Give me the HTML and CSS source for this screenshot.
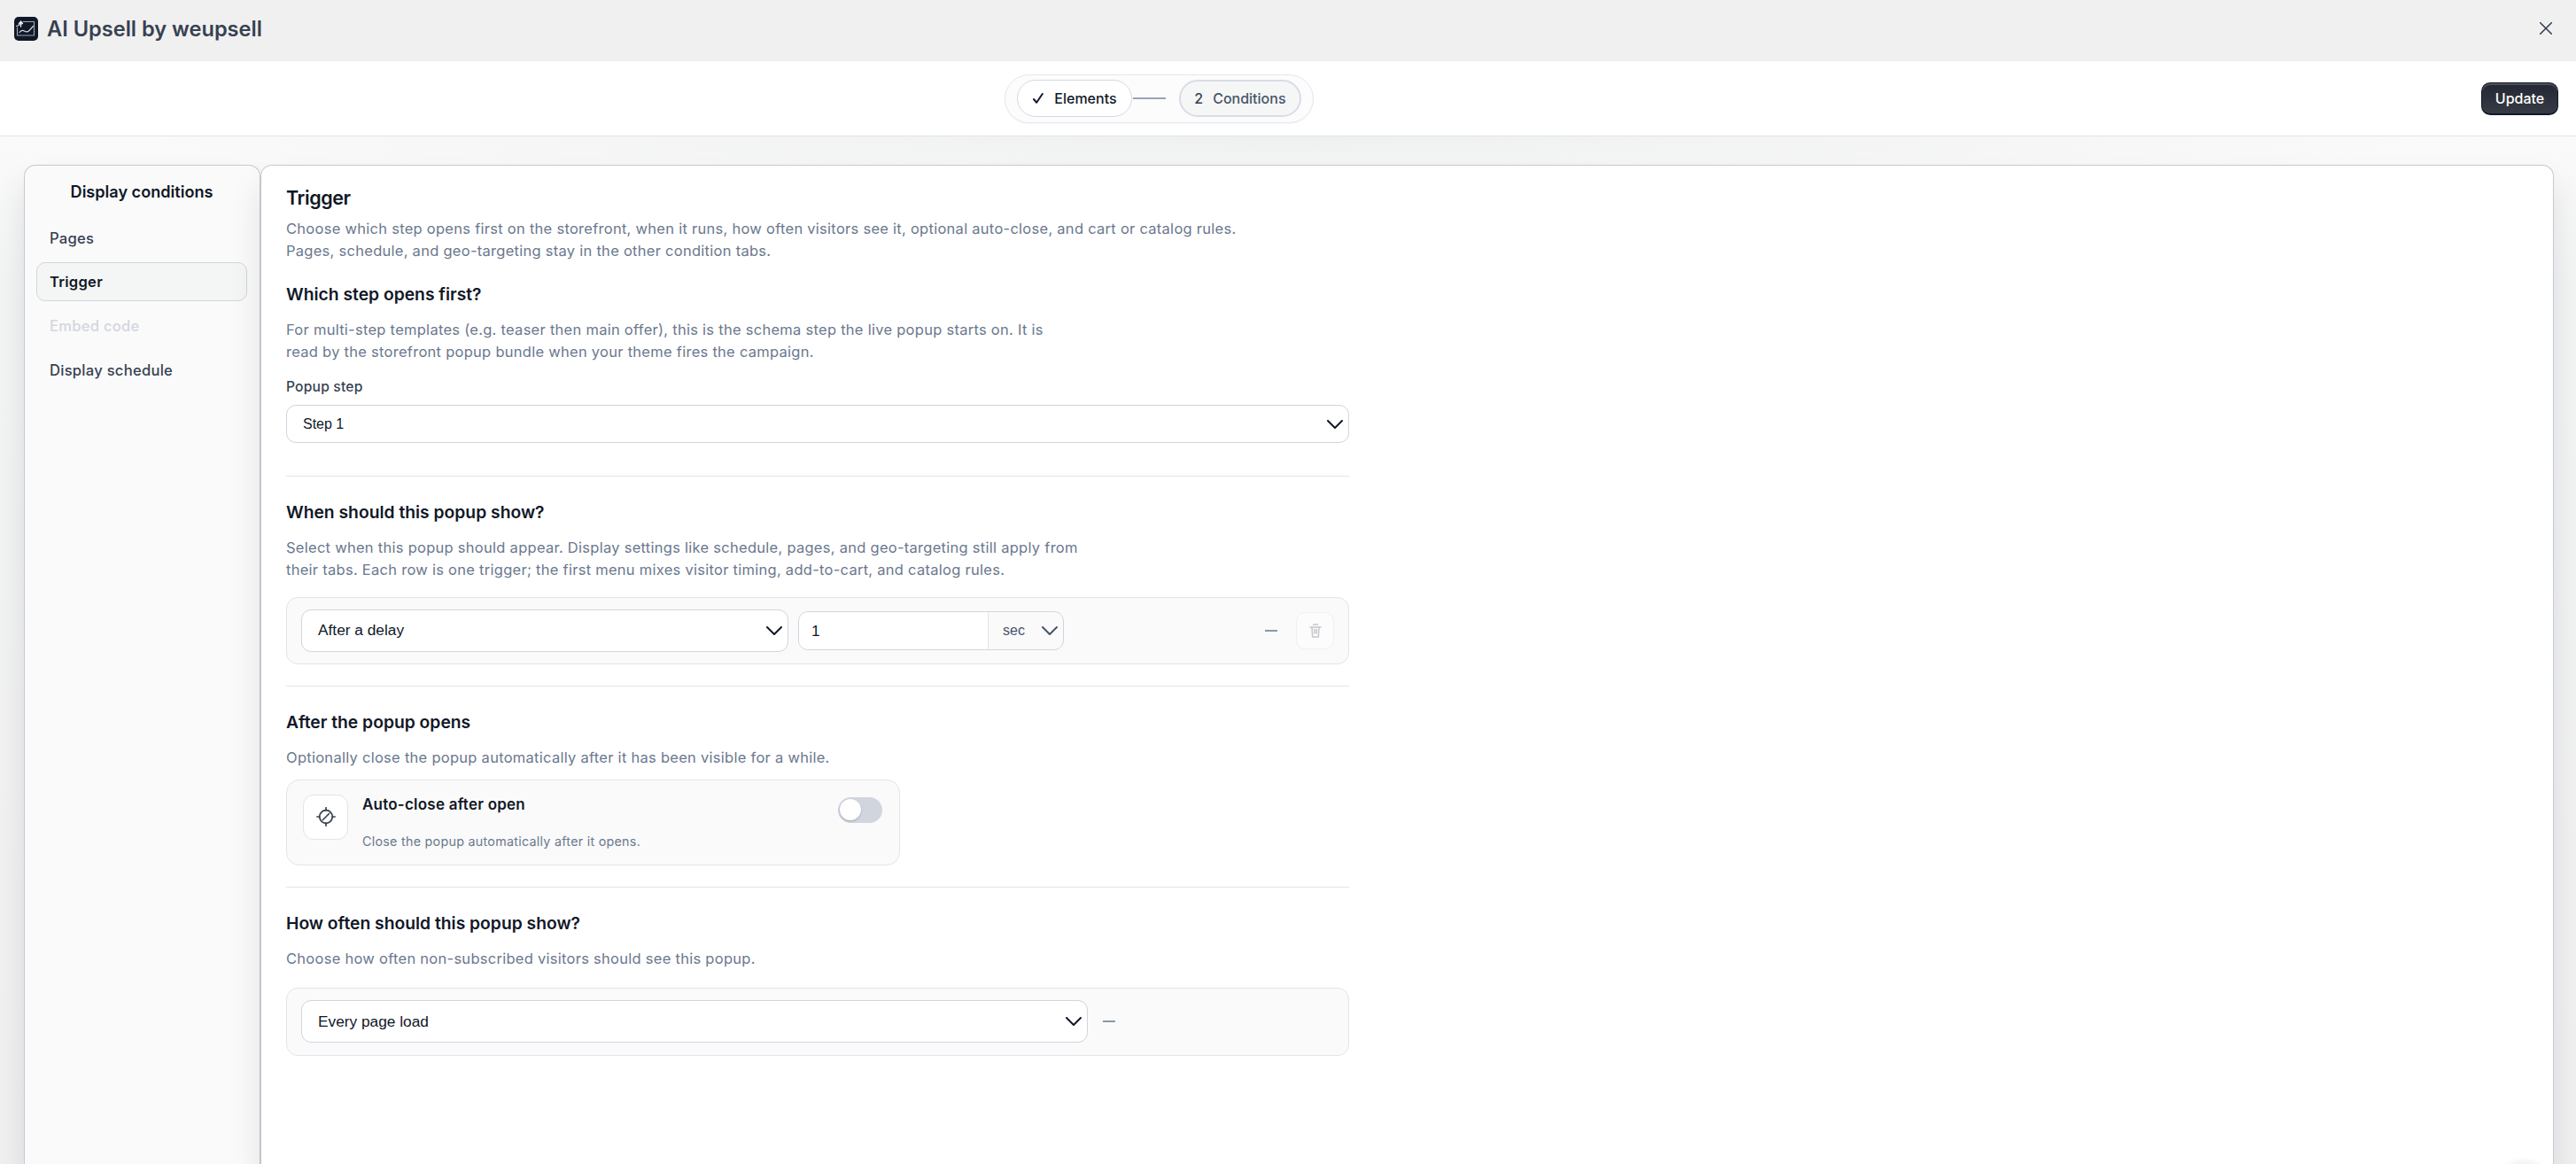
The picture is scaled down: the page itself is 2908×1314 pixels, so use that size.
FILE: index.html
```html
<!DOCTYPE html>
<html lang="en">
<head>
    <meta charset="UTF-8">
    <meta name="viewport" content="width=device-width, initial-scale=1.0">
    <title>AI Upsell by weupsell</title>
    <link rel="stylesheet" href="styles.css">
</head>
<body>
    <header class="titlebar">
        <svg class="logo" viewBox="0 0 27 27">
            <rect width="27" height="27" rx="5" fill="#111827"/>
            <path d="M10 5.500h12.500v15.500h-19v-9" fill="none" stroke="#9aa3b2" stroke-width="1.200"/>
            <path d="M6 17.500c2-2.500 4-2.500 5.500-1.500s4 1 5.500-.5 3-3.500 4.500-5" fill="none" stroke="#d1d5db" stroke-width="1.200"/>
            <path d="M2.500 10.500l3-1v-1.500h3" fill="none" stroke="#d1d5db" stroke-width="1.200"/>
            <path d="M7.500 5v6M5.500 7.500l2-2 2 2" fill="none" stroke="#fff" stroke-width="1.300"/>
        </svg>
        <span class="app-name">AI Upsell by weupsell</span>
        <svg class="close" viewBox="0 0 14 14"><path d="M.7.7l12.600 12.600M13.300.7L.7 13.300"/></svg>
    </header>

    <div class="toolbar">
        <div class="steps">
            <div class="step done">
                <svg class="check" viewBox="0 0 12 12"><path d="M1 7l3.200 3.800L10.800 1"/></svg>
                <span>Elements</span>
            </div>
            <div class="step-line"></div>
            <div class="step current"><span class="num">2</span><span>Conditions</span></div>
        </div>
        <button class="update">Update</button>
    </div>

    <main class="workspace">
        <aside class="sidebar">
            <h3>Display conditions</h3>
            <nav>
                <a>Pages</a>
                <a class="active">Trigger</a>
                <a class="disabled">Embed code</a>
                <a>Display schedule</a>
            </nav>
        </aside>

        <section class="panel">
            <h1>Trigger</h1>
            <p class="intro">Choose which step opens first on the storefront, when it runs, how often visitors see it, optional auto-close, and cart or catalog rules.<br>Pages, schedule, and geo-targeting stay in the other condition tabs.</p>

            <div class="block first">
                <h2>Which step opens first?</h2>
                <p>For multi-step templates (e.g. teaser then main offer), this is the schema step the live popup starts on. It is<br>read by the storefront popup bundle when your theme fires the campaign.</p>
                <label>Popup step</label>
                <div class="select step-select">
                    <span>Step 1</span>
                    <svg class="chevron" viewBox="0 0 18 10"><path d="M1 1l8 8 8-8"/></svg>
                </div>
            </div>

            <div class="block when">
                <h2>When should this popup show?</h2>
                <p>Select when this popup should appear. Display settings like schedule, pages, and geo-targeting still apply from<br>their tabs. Each row is one trigger; the first menu mixes visitor timing, add-to-cart, and catalog rules.</p>
                <div class="rule-row">
                    <div class="select trigger-select">
                        <span>After a delay</span>
                        <svg class="chevron" viewBox="0 0 18 10"><path d="M1 1l8 8 8-8"/></svg>
                    </div>
                    <div class="delay">
                        <span class="value">1</span>
                        <span class="unit">sec
                            <svg class="chevron" viewBox="0 0 18 10"><path d="M1 1l8 8 8-8"/></svg>
                        </span>
                    </div>
                    <span class="dash push"></span>
                    <button class="trash">
                        <svg viewBox="0 0 14 16"><path d="M4.500 1h5M1 4h12M3 4l.7 11h6.600L11 4M6 6.500v4.500M8.200 6.500v4.500"/></svg>
                    </button>
                </div>
            </div>

            <div class="block after">
                <h2>After the popup opens</h2>
                <p>Optionally close the popup automatically after it has been visible for a while.</p>
                <div class="option-card">
                    <div class="option-icon">
                        <svg viewBox="0 0 22 22"><circle cx="11" cy="11" r="7.300"/><path d="M11 .8v3M11 18.200v3M.8 11h3M18.200 11h3M7.500 14.500l7-7"/></svg>
                    </div>
                    <div class="option-text">
                        <strong>Auto-close after open</strong>
                        <small>Close the popup automatically after it opens.</small>
                    </div>
                    <div class="toggle"><i></i></div>
                </div>
            </div>

            <div class="block often">
                <h2>How often should this popup show?</h2>
                <p>Choose how often non-subscribed visitors should see this popup.</p>
                <div class="rule-row">
                    <div class="select often-select">
                        <span>Every page load</span>
                        <svg class="chevron" viewBox="0 0 18 10"><path d="M1 1l8 8 8-8"/></svg>
                    </div>
                    <span class="dash"></span>
                </div>
            </div>
        </section>
    </main>
</body>
</html>
```
FILE: styles.css
```css
*{
    box-sizing: border-box;
}
body{
    margin: 0;
    height: 100vh;
    overflow: hidden;
    display: flex;
    flex-direction: column;
    font-family: Inter, "Liberation Sans", sans-serif;
    color: #111827;
    background-color: #f3f4f4;
}
h1, h2, h3, p{
    margin: 0;
}
svg{
    display: block;
    fill: none;
    stroke: currentColor;
    stroke-linecap: round;
    stroke-linejoin: round;
}
button{
    font-family: inherit;
}

/* top bars */
.titlebar{
    height: 69px;
    flex: none;
    display: flex;
    align-items: center;
    padding: 0 27px 4px 16px;
    background-color: #f0f0f0;
    border-bottom: 1px solid #ececec;
}
.logo{
    width: 27px;
    height: 27px;
    stroke: none;
}
.app-name{
    margin-left: 10px;
    font-size: 23.6px;
    font-weight: 600;
    color: #374151;
}
.close{
    width: 14px;
    height: 14px;
    margin-left: auto;
    color: #374151;
    stroke-width: 1.6;
}
.toolbar{
    height: 85px;
    flex: none;
    display: grid;
    grid-template-columns: 39% auto 1fr;
    align-items: center;
    padding-right: 20px;
    background-color: #fff;
    border-bottom: 1px solid #e2e4ea;
}
.steps{
    grid-column: 2;
    display: flex;
    align-items: center;
    width: 349px;
    height: 55px;
    margin-left: 8px;
    padding: 0 13px;
    border: 1px solid #e5e7ee;
    border-radius: 28px;
    background-color: #fcfcfc;
    box-shadow: 0 1px 2px rgba(15,23,42,.04);
}
.step{
    display: flex;
    align-items: center;
    height: 42px;
    border-radius: 21px;
    font-size: 16px;
    font-weight: 500;
}
.done{
    width: 130px;
    padding-left: 17px;
    gap: 12px;
    background-color: #fff;
    border: 1px solid #d5d9e4;
}
.check{
    width: 12px;
    height: 12px;
    stroke-width: 2;
}
.step-line{
    width: 37px;
    height: 2px;
    margin: 0 15px 0 1px;
    background-color: #9aa3b5;
}
.current{
    width: 138px;
    padding-left: 15px;
    gap: 11px;
    color: #475569;
    background-color: #f5f6f6;
    border: 2px solid #d8dce6;
}
.num{
    color: #374151;
}
.update{
    justify-self: end;
    width: 87px;
    height: 37px;
    padding: 0;
    border: 1px solid #111827;
    border-bottom-width: 2px;
    border-radius: 10px;
    background: linear-gradient(#232733, #373b46);
    box-shadow: inset 0 2px 0 #4b505c;
    color: #fff;
    font-size: 16px;
    font-weight: 500;
}

/* workspace */
.workspace{
    flex: 1;
    min-height: 0;
    display: flex;
    padding: 32px 25px 0 27px;
    background: radial-gradient(ellipse 1300px 60px at 50% 0, #eeefef, rgba(238,239,239,0)), linear-gradient(#fafafa, #f3f4f4 160px, #f0f0f1);
}
.sidebar,
.panel{
    border: 1px solid #c6c9d0;
    border-bottom: 0;
    border-radius: 13px 13px 0 0;
    box-shadow: 0 22px 36px rgba(15,23,42,.1);
}
.sidebar{
    width: 267px;
    flex: none;
    padding: 16px 14px 0 13px;
    background-color: #fafafa;
}
.sidebar h3{
    font-size: 18.1px;
    font-weight: 600;
    line-height: 26px;
    text-align: center;
}
.sidebar nav{
    display: flex;
    flex-direction: column;
    gap: 5.7px;
    margin-top: 17.5px;
}
.sidebar a{
    height: 44px;
    padding: 0 14px;
    border: 1px solid transparent;
    border-radius: 10px;
    font-size: 16.6px;
    font-weight: 500;
    line-height: 42px;
    letter-spacing: .25px;
    color: #374151;
}
.sidebar a.active{
    color: #111827;
    font-weight: 600;
    background-color: #f4f5f5;
    border-color: #d1d5de;
}
.sidebar a.disabled{
    color: #d3d6df;
}
.panel{
    flex: 1;
    padding: 22px 28px 0;
    /* faint glow of the chat bubble under the bottom edge */
    background: radial-gradient(circle 38px at calc(100% - 34px) calc(100% + 30px), #ededed 70%, #fff);
    background-color: #fff;
}
h1{
    font-size: 21.5px;
    font-weight: 600;
    line-height: 28px;
    letter-spacing: -.4px;
}
h2{
    font-size: 19.3px;
    font-weight: 600;
    line-height: 26px;
}
p{
    font-size: 16.5px;
    line-height: 25.1px;
    letter-spacing: .27px;
    color: #6b788e;
}
.intro{
    margin-top: 9px;
}
.block{
    width: 1200px;
    padding-top: 27px;
    border-top: 1px solid #e2e4ea;
}
.block p{
    margin-top: 15px;
}
.first{
    padding-top: 23px;
    border-top: 0;
}
.when{
    margin-top: 37px;
}
.after{
    margin-top: 24px;
}
.often{
    margin-top: 24px;
}
label{
    display: block;
    margin: 15.5px 0 9.5px;
    font-size: 15.6px;
    font-weight: 500;
    line-height: 22px;
    letter-spacing: .2px;
    color: #374151;
}
.select{
    display: flex;
    align-items: center;
    justify-content: space-between;
    height: 48px;
    padding: 0 6px 0 18px;
    background-color: #fff;
    border: 1px solid #d1d5de;
    border-radius: 11px;
    font-family: "Liberation Sans", sans-serif;
    font-size: 17.3px;
}
.step-select{
    height: 43px;
    font-size: 16px;
}
.trigger-select{
    width: 550px;
}
.often-select{
    width: 888px;
}
.chevron{
    width: 18px;
    height: 10px;
    stroke-width: 2;
}
.rule-row{
    display: flex;
    align-items: center;
    height: 76px;
    margin-top: 17px;
    padding: 0 16px;
    background-color: #fafafa;
    border: 1px solid #e2e4ea;
    border-radius: 13px;
}
.often .rule-row{
    height: 77px;
    margin-top: 20px;
}
.delay{
    display: flex;
    width: 300px;
    height: 44px;
    margin-left: 11px;
    border: 1px solid #d1d5de;
    border-radius: 11px;
    overflow: hidden;
    font-family: "Liberation Sans", sans-serif;
    font-size: 17.3px;
    line-height: 42px;
}
.value{
    flex: 1;
    padding-left: 14px;
    background-color: #fff;
}
.unit{
    display: flex;
    align-items: center;
    justify-content: space-between;
    width: 85px;
    padding: 0 6px 0 16px;
    border-left: 1px solid #e2e4ea;
    font-size: 16px;
    color: #475569;
}
.dash{
    width: 14px;
    height: 2px;
    margin-left: 17px;
    background-color: #8c97a9;
}
.push{
    margin-left: auto;
}
.trash{
    display: flex;
    align-items: center;
    justify-content: center;
    width: 43px;
    height: 42px;
    margin-left: 21px;
    padding: 0;
    background-color: #fcfcfc;
    border: 1px solid #f0f0f2;
    border-radius: 10px;
    color: #c4c6ca;
}
.trash svg{
    width: 14px;
    height: 16px;
    stroke-width: 1.5;
}
.option-card{
    display: flex;
    width: 693px;
    height: 97px;
    margin-top: 12px;
    padding: 16px 19px 0 18px;
    background-color: #fafafa;
    border: 1px solid #e2e4ea;
    border-radius: 15px;
}
.option-icon{
    display: flex;
    align-items: center;
    justify-content: center;
    width: 51px;
    height: 51px;
    background-color: #fff;
    border: 1px solid #e2e4ea;
    border-radius: 12px;
    color: #374151;
}
.option-icon svg{
    width: 22px;
    height: 22px;
    stroke-width: 1.7;
}
.option-text{
    flex: 1;
    margin-left: 16px;
}
.option-text strong{
    display: block;
    margin-top: -1px;
    font-size: 17px;
    font-weight: 600;
    line-height: 24px;
    letter-spacing: .22px;
}
.option-text small{
    display: block;
    margin-top: 19px;
    font-size: 14.3px;
    line-height: 22px;
    letter-spacing: .27px;
    color: #6b788e;
}
.toggle{
    width: 50px;
    height: 29px;
    margin-top: 3px;
    padding: 2.5px 2px;
    border-radius: 15px;
    background-color: #d1d5de;
}
.toggle i{
    display: block;
    width: 24px;
    height: 24px;
    border-radius: 50%;
    background-color: #fff;
    box-shadow: 0 1px 2px rgba(15,23,42,.25);
}
```
